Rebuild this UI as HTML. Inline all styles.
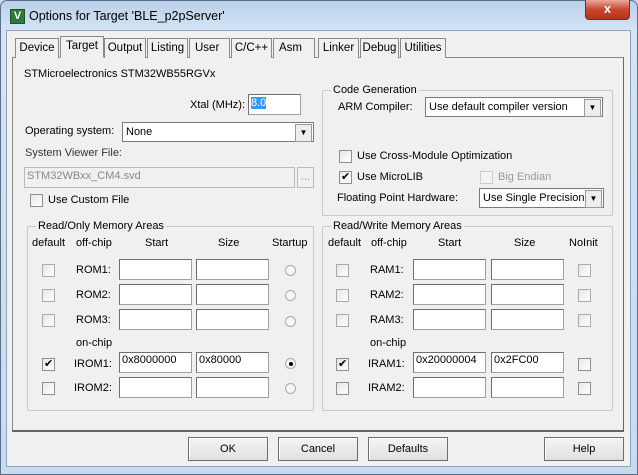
<!DOCTYPE html>
<html><head><meta charset="utf-8"><style>
*{box-sizing:border-box;margin:0;padding:0}
body{width:638px;height:475px;overflow:hidden;background:#c9dcf0;font-family:"Liberation Sans",sans-serif;font-size:11px;color:#000;position:relative}
.a{position:absolute}
.t{position:absolute;line-height:13px;white-space:nowrap}
.frame{left:0;top:0;width:638px;height:475px;background:linear-gradient(#b9d1ea,#d4e4f5 30px,#c6dbf1);border:1px solid #5a6e86;border-radius:7px 7px 0 0}
.client{left:6px;top:30px;width:625px;height:437px;background:#f0f0f0;border:1px solid #8ea4bd}
.tab{position:absolute;top:38px;height:20px;border:1px solid #8a8a8a;border-bottom:none;background:#f0f0f0;text-align:center;line-height:18px;font-size:11.5px}
.panel{left:12px;top:57px;width:612px;height:375px;border:1px solid #8a8a8a;border-right-color:#666;border-bottom:2px solid #666;background:#f0f0f0}
.grp{position:absolute;border:1px solid #c8c8c8;border-radius:2px}
.grp>span{position:absolute;top:-8px;left:8px;background:#f0f0f0;padding:0 2px;line-height:14px}
.in{position:absolute;height:21px;background:#fff;border:1px solid #a0a0a0;border-top-color:#6e6e6e;border-left-color:#6e6e6e;padding:1px 2px;line-height:15px}
.cb{position:absolute;width:13px;height:13px;border:1px solid #8e8f8f;background:linear-gradient(135deg,#e6e6e6,#fff)}
.cb.c::after{content:"✔";position:absolute;left:1px;top:-2px;font-size:11px}
.rd{position:absolute;width:11px;height:11px;border-radius:50%;border:1px solid #aaa;background:#f6f6f6}
.rd.c::after{content:"";position:absolute;left:3px;top:3px;width:4px;height:4px;border-radius:50%;background:#000}
.sel{position:absolute;height:20px;background:#fff;border:1px solid #7a7a7a;padding:2px 3px;line-height:14px}
.sel::after{content:"▼";position:absolute;right:1px;top:1px;width:15px;height:16px;border:1px solid #999;background:#eee;font-size:8px;text-align:center;line-height:16px}
.btn{position:absolute;top:437px;height:24px;border:1px solid #6d6d6d;background:linear-gradient(#f4f4f4,#e0e0e0);text-align:center;line-height:22px;box-shadow:inset 1px 1px #fff}
</style></head><body>
<div class="a frame"></div>
<div class="a" style="left:10px;top:9px;width:15px;height:15px;background:#2d7a3a;border:1px solid #1e5228;color:#fff;font-weight:bold;font-size:11px;line-height:13px;text-align:center">V</div>
<div class="t" style="left:29px;top:9px;font-size:12.5px;line-height:15px">Options for Target 'BLE_p2pServer'</div>
<div class="a" style="left:585px;top:0;width:45px;height:20px;background:linear-gradient(#e9a99c,#c9462f 50%,#b8321c);border:1px solid #7d2b1d;border-top:none;border-radius:0 0 4px 4px;color:#fff;font-weight:bold;text-align:center;line-height:18px;font-size:13px">x</div>
<div class="a client"></div>
<div class="a panel"></div>
<div class="tab" style="left:15px;width:44px">Device</div>
<div class="tab" style="left:60px;width:44px;top:36px;height:22px;background:#f0f0f0;z-index:2;border-bottom:1px solid #f0f0f0">Target</div>
<div class="tab" style="left:104px;width:42px">Output</div>
<div class="tab" style="left:147px;width:41px">Listing</div>
<div class="tab" style="left:189px;width:41px;text-align:left;padding-left:5px">User</div>
<div class="tab" style="left:231px;width:41px">C/C++</div>
<div class="tab" style="left:273px;width:42px;text-align:left;padding-left:5px">Asm</div>
<div class="tab" style="left:318px;width:41px">Linker</div>
<div class="tab" style="left:360px;width:39px">Debug</div>
<div class="tab" style="left:400px;width:46px">Utilities</div>

<div class="t" style="left:24px;top:68px">STMicroelectronics STM32WB55RGVx</div>
<div class="t" style="left:190px;top:99px">Xtal (MHz):</div>
<div class="in" style="left:248px;top:94px;width:53px;height:21px"><span style="background:#3399ff;color:#fff">8.0</span></div>
<div class="t" style="left:25px;top:125px">Operating system:</div>
<div class="sel" style="left:122px;top:122px;width:192px">None</div>
<div class="t" style="left:25px;top:147px;color:#333">System Viewer File:</div>
<div class="in" style="left:24px;top:167px;width:271px;background:#f0f0f0;color:#888;border-color:#bbb">STM32WBxx_CM4.svd</div>
<div class="a" style="left:297px;top:167px;width:17px;height:21px;border:1px solid #bbb;color:#999;text-align:center;line-height:18px">...</div>
<div class="cb" style="left:30px;top:194px"></div>
<div class="t" style="left:48px;top:194px">Use Custom File</div>

<div class="grp" style="left:27px;top:226px;width:287px;height:185px"><span>Read/Only Memory Areas</span></div>
<div class="t" style="left:32px;top:237px">default</div>
<div class="t" style="left:76px;top:237px">off-chip</div>
<div class="t" style="left:145px;top:237px">Start</div>
<div class="t" style="left:218px;top:237px">Size</div>
<div class="t" style="left:272px;top:237px">Startup</div>
<div class="cb" style="left:42px;top:264px;border-color:#aaa"></div><div class="t" style="left:76px;top:264px">ROM1:</div>
<div class="in" style="left:119px;top:259px;width:73px"></div><div class="in" style="left:196px;top:259px;width:73px"></div><div class="rd" style="left:285px;top:265px"></div>
<div class="cb" style="left:42px;top:289px;border-color:#aaa"></div><div class="t" style="left:76px;top:289px">ROM2:</div>
<div class="in" style="left:119px;top:284px;width:73px"></div><div class="in" style="left:196px;top:284px;width:73px"></div><div class="rd" style="left:285px;top:290px"></div>
<div class="cb" style="left:42px;top:314px;border-color:#aaa"></div><div class="t" style="left:76px;top:314px">ROM3:</div>
<div class="in" style="left:119px;top:309px;width:73px"></div><div class="in" style="left:196px;top:309px;width:73px"></div><div class="rd" style="left:285px;top:316px"></div>
<div class="t" style="left:76px;top:337px">on-chip</div>
<div class="cb c" style="left:42px;top:358px"></div><div class="t" style="left:74px;top:358px">IROM1:</div>
<div class="in" style="left:119px;top:352px;width:73px;padding-top:0">0x8000000</div><div class="in" style="left:196px;top:352px;width:73px;padding-top:0">0x80000</div><div class="rd c" style="left:285px;top:358px"></div>
<div class="cb" style="left:42px;top:382px"></div><div class="t" style="left:74px;top:382px">IROM2:</div>
<div class="in" style="left:119px;top:377px;width:73px"></div><div class="in" style="left:196px;top:377px;width:73px"></div><div class="rd" style="left:285px;top:383px"></div>

<div class="grp" style="left:322px;top:90px;width:291px;height:126px"><span>Code Generation</span></div>
<div class="t" style="left:338px;top:101px">ARM Compiler:</div>
<div class="sel" style="left:425px;top:97px;width:178px">Use default compiler version</div>
<div class="cb" style="left:339px;top:150px"></div><div class="t" style="left:357px;top:150px">Use Cross-Module Optimization</div>
<div class="cb c" style="left:339px;top:171px"></div><div class="t" style="left:357px;top:171px">Use MicroLIB</div>
<div class="cb" style="left:480px;top:171px;border-color:#ccc;background:#f3f3f3"></div><div class="t" style="left:498px;top:171px;color:#999">Big Endian</div>
<div class="t" style="left:337px;top:192px">Floating Point Hardware:</div>
<div class="sel" style="left:479px;top:188px;width:125px">Use Single Precision</div>

<div class="grp" style="left:322px;top:226px;width:291px;height:185px"><span>Read/Write Memory Areas</span></div>
<div class="t" style="left:328px;top:237px">default</div>
<div class="t" style="left:371px;top:237px">off-chip</div>
<div class="t" style="left:438px;top:237px">Start</div>
<div class="t" style="left:514px;top:237px">Size</div>
<div class="t" style="left:569px;top:237px">NoInit</div>
<div class="cb" style="left:336px;top:264px;border-color:#aaa"></div><div class="t" style="left:370px;top:264px">RAM1:</div>
<div class="in" style="left:413px;top:259px;width:73px"></div><div class="in" style="left:491px;top:259px;width:73px"></div><div class="cb" style="left:578px;top:264px;border-color:#aaa"></div>
<div class="cb" style="left:336px;top:289px;border-color:#aaa"></div><div class="t" style="left:370px;top:289px">RAM2:</div>
<div class="in" style="left:413px;top:284px;width:73px"></div><div class="in" style="left:491px;top:284px;width:73px"></div><div class="cb" style="left:578px;top:289px;border-color:#aaa"></div>
<div class="cb" style="left:336px;top:314px;border-color:#aaa"></div><div class="t" style="left:370px;top:314px">RAM3:</div>
<div class="in" style="left:413px;top:309px;width:73px"></div><div class="in" style="left:491px;top:309px;width:73px"></div><div class="cb" style="left:578px;top:314px;border-color:#aaa"></div>
<div class="t" style="left:370px;top:337px">on-chip</div>
<div class="cb c" style="left:336px;top:358px"></div><div class="t" style="left:368px;top:358px">IRAM1:</div>
<div class="in" style="left:413px;top:352px;width:73px;padding-top:0">0x20000004</div><div class="in" style="left:491px;top:352px;width:73px;padding-top:0">0x2FC00</div><div class="cb" style="left:578px;top:358px"></div>
<div class="cb" style="left:336px;top:382px"></div><div class="t" style="left:368px;top:382px">IRAM2:</div>
<div class="in" style="left:413px;top:377px;width:73px"></div><div class="in" style="left:491px;top:377px;width:73px"></div><div class="cb" style="left:578px;top:382px"></div>

<div class="btn" style="left:188px;width:80px">OK</div>
<div class="btn" style="left:278px;width:80px">Cancel</div>
<div class="btn" style="left:368px;width:80px">Defaults</div>
<div class="btn" style="left:544px;width:80px">Help</div>
</body></html>
